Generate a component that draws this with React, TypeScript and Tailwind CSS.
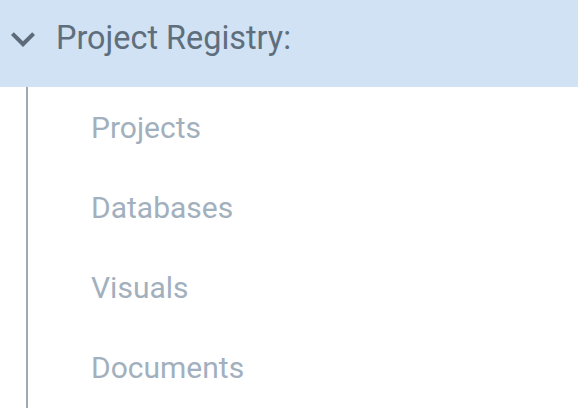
import React from 'react';

const items = ['Projects', 'Databases', 'Visuals', 'Documents'];

const App: React.FC = () => {
  return (
    <div className="w-[578px] h-[420px] bg-white overflow-hidden" style={{ fontFamily: 'Roboto, "Liberation Sans", sans-serif' }}>
      <div className="h-[87px] bg-[#d0e2f3] flex items-center pb-[10px]">
        <svg width="48" height="48" viewBox="0 0 24 24" className="ml-[-1px] fill-[#5d6b79]">
          <path d="M16.59 8.59L12 13.17 7.41 8.59 6 10l6 6 6-6z" />
        </svg>
        <span className="ml-[9px] text-[32.4px] text-[#5f6e7c] leading-none">Project Registry:</span>
      </div>
      <div className="ml-[26px] border-l-2 border-[#9ea9b4] pt-px">
        {items.map(item => (
          <div key={item} className="h-20 flex items-center pl-[63px] text-[30px] leading-none text-[#a2b0be]">
            {item}
          </div>
        ))}
      </div>
    </div>
  );
};

export default App;
